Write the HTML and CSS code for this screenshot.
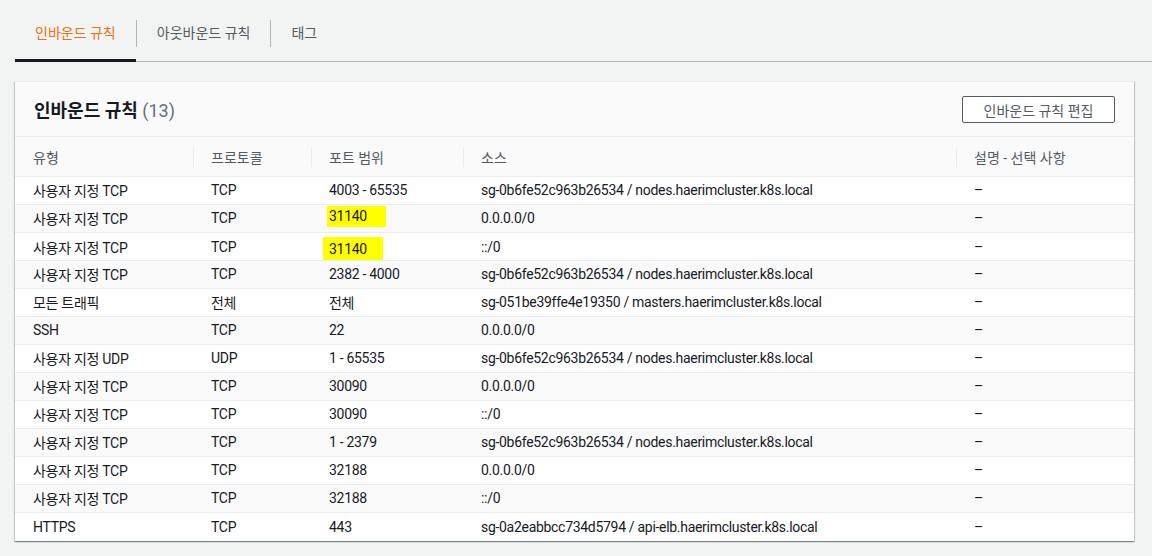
FILE: index.html
```html
<!DOCTYPE html>
<html lang="ko">
<head>
<meta charset="utf-8">
<title>인바운드 규칙</title>
<link rel="stylesheet" href="styles.css">
</head>
<body>
<div class="page">
  <nav class="tabs">
    <div class="tab active">인바운드 규칙</div>
    <div class="tab-sep"></div>
    <div class="tab">아웃바운드 규칙</div>
    <div class="tab-sep"></div>
    <div class="tab">태그</div>
  </nav>

  <section class="card">
    <header class="card-head">
      <h2 class="card-title">인바운드 규칙 <span class="count">(13)</span></h2>
      <button class="btn">인바운드 규칙 편집</button>
    </header>
    <div class="table">
      <div class="row head">
        <div class="cell">유형</div>
        <div class="cell"><span class="hsep"></span><span>프로토콜</span></div>
        <div class="cell"><span class="hsep"></span><span>포트 범위</span></div>
        <div class="cell"><span class="hsep"></span><span>소스</span></div>
        <div class="cell"><span class="hsep"></span><span>설명 - 선택 사항</span></div>
      </div>
      <div class="row"><div class="cell">사용자 지정 TCP</div><div class="cell">TCP</div><div class="cell">4003 - 65535</div><div class="cell">sg-0b6fe52c963b26534 / nodes.haerimcluster.k8s.local</div><div class="cell">–</div></div>
      <div class="row"><div class="cell">사용자 지정 TCP</div><div class="cell">TCP</div><div class="cell"><span class="hl hl-a">31140</span></div><div class="cell">0.0.0.0/0</div><div class="cell">–</div></div>
      <div class="row"><div class="cell">사용자 지정 TCP</div><div class="cell">TCP</div><div class="cell"><span class="hl hl-b">31140</span></div><div class="cell">::/0</div><div class="cell">–</div></div>
      <div class="row"><div class="cell">사용자 지정 TCP</div><div class="cell">TCP</div><div class="cell">2382 - 4000</div><div class="cell">sg-0b6fe52c963b26534 / nodes.haerimcluster.k8s.local</div><div class="cell">–</div></div>
      <div class="row"><div class="cell">모든 트래픽</div><div class="cell">전체</div><div class="cell">전체</div><div class="cell">sg-051be39ffe4e19350 / masters.haerimcluster.k8s.local</div><div class="cell">–</div></div>
      <div class="row"><div class="cell">SSH</div><div class="cell">TCP</div><div class="cell">22</div><div class="cell">0.0.0.0/0</div><div class="cell">–</div></div>
      <div class="row"><div class="cell">사용자 지정 UDP</div><div class="cell">UDP</div><div class="cell">1 - 65535</div><div class="cell">sg-0b6fe52c963b26534 / nodes.haerimcluster.k8s.local</div><div class="cell">–</div></div>
      <div class="row"><div class="cell">사용자 지정 TCP</div><div class="cell">TCP</div><div class="cell">30090</div><div class="cell">0.0.0.0/0</div><div class="cell">–</div></div>
      <div class="row"><div class="cell">사용자 지정 TCP</div><div class="cell">TCP</div><div class="cell">30090</div><div class="cell">::/0</div><div class="cell">–</div></div>
      <div class="row"><div class="cell">사용자 지정 TCP</div><div class="cell">TCP</div><div class="cell">1 - 2379</div><div class="cell">sg-0b6fe52c963b26534 / nodes.haerimcluster.k8s.local</div><div class="cell">–</div></div>
      <div class="row"><div class="cell">사용자 지정 TCP</div><div class="cell">TCP</div><div class="cell">32188</div><div class="cell">0.0.0.0/0</div><div class="cell">–</div></div>
      <div class="row"><div class="cell">사용자 지정 TCP</div><div class="cell">TCP</div><div class="cell">32188</div><div class="cell">::/0</div><div class="cell">–</div></div>
      <div class="row"><div class="cell">HTTPS</div><div class="cell">TCP</div><div class="cell">443</div><div class="cell">sg-0a2eabbcc734d5794 / api-elb.haerimcluster.k8s.local</div><div class="cell">–</div></div>
    </div>
  </section>
</div>
</body>
</html>
```

FILE: styles.css
```css
* { box-sizing: border-box; }

html, body {
  margin: 0;
  padding: 0;
  background: #f2f3f3;
  font-family: Roboto, "Noto Sans CJK KR", sans-serif;
  color: #16191f;
  font-size: 14px;
}

.page {
  padding-left: 15px;
  height: 556px;
  overflow: hidden;
}

/* Tabs */
.tabs {
  display: flex;
  align-items: center;
  height: 62px;
  border-bottom: 1px solid #aab7b8;
}

.tab {
  height: 62px;
  padding: 4px 20px 0;
  display: flex;
  align-items: center;
  font-size: 14px;
  color: #545b64;
  margin-bottom: -1px;
  border-bottom: 3px solid transparent;
}

.tab.active {
  color: #ec7211;
  border-bottom-color: #16191f;
}

.tab-sep {
  width: 1px;
  height: 27px;
  background: #aab7b8;
  margin-top: 5px;
}

/* Card */
.card {
  margin: 19px 18px 0 0;
  background: #fff;
  border-top: 1px solid #eaeded;
  box-shadow: 0 1px 1px 0 rgba(0, 28, 36, 0.3), 1px 1px 1px 0 rgba(0, 28, 36, 0.15), -1px 1px 1px 0 rgba(0, 28, 36, 0.15);
}

.card-head {
  display: flex;
  align-items: center;
  justify-content: space-between;
  height: 55px;
  padding: 0 19px 0 19px;
  background: #fafafa;
  border-bottom: 1px solid #eaeded;
}

.card-title {
  margin: 0;
  font-size: 18px;
  font-weight: 700;
  color: #16191f;
}

.count {
  font-weight: 400;
  color: #687078;
}

.btn {
  height: 27px;
  width: 153px;
  margin-top: 1px;
  background: #fff;
  border: 1px solid #545b64;
  border-radius: 2px;
  font-family: inherit;
  font-size: 14px;
  color: #545b64;
  padding: 0;
}

/* Table */
.table {
  display: flex;
  flex-direction: column;
}

.row {
  display: grid;
  grid-template-columns: 178px 118px 152px 493px 1fr;
  height: 28px;
  border-bottom: 1px solid #eaeded;
  letter-spacing: -0.3px;
}

.row:last-child {
  border-bottom: none;
}

.row:nth-child(odd) {
  background: #fafafa;
}

.row.head {
  height: 40px;
  background: #fafafa;
  color: #545b64;
  letter-spacing: 0;
}

.cell {
  display: flex;
  align-items: center;
  padding-left: 18px;
  padding-bottom: 1px;
  white-space: nowrap;
}

.head .cell {
  padding-left: 0;
  padding-bottom: 0;
}

.head .cell:first-child {
  padding-left: 18px;
}

.hsep {
  width: 1px;
  height: 20px;
  background: #eaeded;
  margin-right: 17px;
}

.hl {
  display: inline-block;
  background: #ffff00;
  line-height: 21px;
}

.hl-a {
  margin-left: -2px;
  padding: 0 19px 0 2px;
  margin-top: -3px;
}

.hl-b {
  margin-left: -6px;
  padding: 2px 16px 0 6px;
  margin-top: 4px;
}
```
